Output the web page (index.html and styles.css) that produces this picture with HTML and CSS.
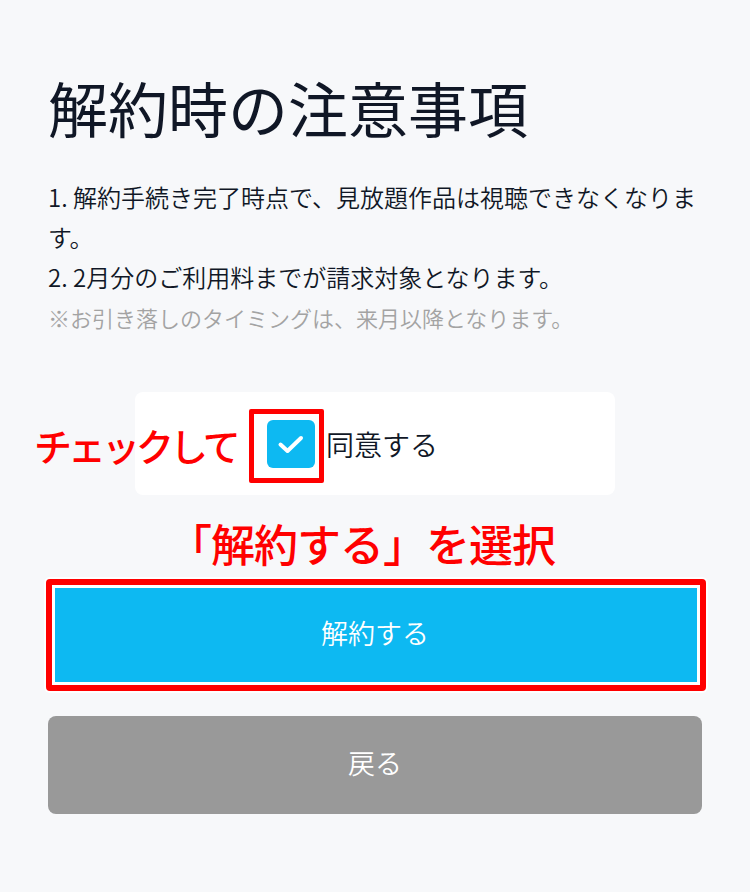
FILE: index.html
```html
<!DOCTYPE html>
<html lang="ja">
<head>
    <meta charset="UTF-8">
    <meta name="viewport" content="width=device-width, initial-scale=1.0">
    <title>解約時の注意事項</title>
    <link rel="stylesheet" href="styles.css">
</head>
<body>
    <main class="page">
        <h1 class="page-title">解約時の注意事項</h1>

        <div class="notes">
            <p>1. 解約手続き完了時点で、見放題作品は視聴できなくなります。</p>
            <p>2. 2月分のご利用料までが請求対象となります。</p>
            <p class="notes-sub">※お引き落しのタイミングは、来月以降となります。</p>
        </div>

        <div class="agree-wrap">
            <label class="agree-card">
                <span class="checkbox">
                    <svg width="48" height="48" viewBox="0 0 48 48">
                        <polyline points="13.5,24.5 20.5,31 34,18" fill="none" stroke="#fff" stroke-width="4" stroke-linecap="round" stroke-linejoin="round"/>
                    </svg>
                </span>
                <span class="agree-text">同意する</span>
            </label>
            <span class="hint hint-check">チェックして</span>
            <span class="mark mark-check"></span>
        </div>

        <div class="actions">
            <span class="hint hint-select">「解約する」を選択</span>
            <button type="button" class="btn btn-primary">
                解約する
                <span class="mark mark-btn"></span>
            </button>
            <button type="button" class="btn btn-back">戻る</button>
        </div>
    </main>
</body>
</html>
```

FILE: styles.css
```css
:root {
    --bg: #f7f8fa;
    --text: #101726;
    --muted: #a3a3a3;
    --primary: #0db9f2;
    --back: #999999;
    --hint: #ff0000;
}

* {
    margin: 0;
    padding: 0;
    box-sizing: border-box;
    font-family: 'Noto Sans CJK JP', 'Noto Sans', sans-serif;
}

body {
    background-color: var(--bg);
    width: 750px;
    min-height: 892px;
}

.page {
    padding: 71px 48px 0;
}

.page-title {
    font-size: 60px;
    font-weight: 400;
    line-height: 72px;
    color: var(--text);
    margin-bottom: 34px;
}

.notes {
    font-family: 'Liberation Sans', 'Noto Sans CJK JP', sans-serif;
    font-size: 24px;
    font-weight: 350;
    line-height: 40px;
    color: var(--text);
}

.notes-sub {
    font-size: 22px;
    color: var(--muted);
}

.agree-wrap {
    position: relative;
    margin-top: 55px;
}

.agree-card {
    display: flex;
    align-items: center;
    gap: 11px;
    width: 480px;
    height: 103px;
    margin: 0 auto;
    padding-left: 132px;
    background: white;
    border-radius: 8px;
}

.checkbox {
    display: block;
    width: 48px;
    height: 48px;
    background-color: var(--primary);
    border-radius: 6px;
}

.checkbox svg {
    display: block;
}

.agree-text {
    font-size: 28px;
    font-weight: 350;
    color: var(--text);
}

.hint {
    position: absolute;
    color: var(--hint);
    font-weight: 500;
    line-height: 1;
    white-space: nowrap;
}

.hint-check {
    left: -14px;
    top: 34px;
    font-size: 38px;
    letter-spacing: -4px;
}

.hint-select {
    left: 120px;
    top: -65px;
    font-size: 44px;
    letter-spacing: -1px;
}

.mark {
    position: absolute;
    border-style: solid;
    border-color: var(--hint);
    pointer-events: none;
}

.mark-check {
    left: 201px;
    top: 17px;
    width: 75px;
    height: 74px;
    border-width: 5px;
    border-radius: 2px;
}

.actions {
    position: relative;
    margin-top: 91px;
    display: flex;
    flex-direction: column;
    gap: 32px;
}

.btn {
    position: relative;
    width: 100%;
    height: 98px;
    padding-bottom: 6px;
    border: none;
    border-radius: 6px;
    font-size: 27px;
    font-weight: 350;
    color: white;
    cursor: pointer;
}

.btn-primary {
    background-color: var(--primary);
}

.btn-back {
    background-color: var(--back);
    border-radius: 8px;
}

.mark-btn {
    left: -2px;
    right: -4px;
    top: -7px;
    bottom: -7px;
    border-width: 6px;
    border-radius: 4px;
    box-shadow: inset 0 0 0 3px white, 0 0 0 2px white;
}
```
